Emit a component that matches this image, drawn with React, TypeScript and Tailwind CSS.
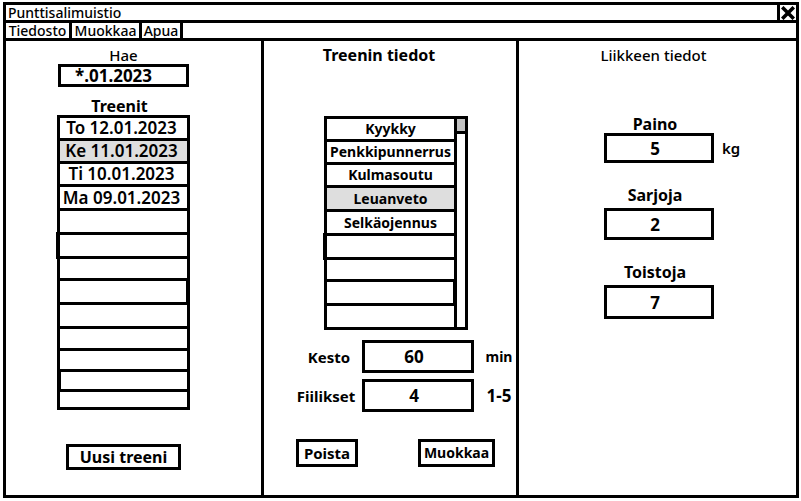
import { useState } from "react";
import type { ReactNode } from "react";

type Row = { text?: string; className: string };

const workouts: Row[] = [
  { text: "To 12.01.2023", className: "h-[23px]" },
  { text: "Ke 11.01.2023", className: "h-[23px]" },
  { text: "Ti 10.01.2023", className: "h-[23px]" },
  { text: "Ma 09.01.2023", className: "h-6" },
  { className: "h-6" },
  { className: "h-6 shadow-[-4px_0_0_#000,-4px_-3px_0_#000]" },
  { className: "h-[22px]" },
  { className: "h-6 border-r" },
  { className: "h-6" },
  { className: "h-[22px]" },
  { className: "h-[21px]" },
  { className: "h-5 border-l" },
  { className: "h-[18px]" },
];

const exercises: Row[] = [
  { text: "Kyykky", className: "h-[23px]" },
  { text: "Penkkipunnerrus", className: "h-[23px]" },
  { text: "Kulmasoutu", className: "h-[23px]" },
  { text: "Leuanveto", className: "h-6" },
  { text: "Selkäojennus", className: "h-6" },
  { className: "h-6 shadow-[-4px_0_0_#000,-4px_-3px_0_#000]" },
  { className: "h-[22px]" },
  { className: "h-6 border-r" },
  { className: "h-6" },
];

const details = [
  { id: "paino", label: "Paino", value: "5", unit: "kg", gap: "gap-px", box: "h-[30px]" },
  { id: "sarjoja", label: "Sarjoja", value: "2", unit: "", gap: "gap-[5px]", box: "h-8" },
  { id: "toistoja", label: "Toistoja", value: "7", unit: "", gap: "gap-[5px]", box: "h-[34px]" },
];

function RowList({ rows, initial, label, textClass }: { rows: Row[]; initial: number; label: string; textClass: string }) {
  const [selected, setSelected] = useState(initial);
  return (
    <ul aria-label={label} className="flex-1">
      {rows.map((row, i) => (
        <li key={i} className={`border-b-3 border-black ${row.className}`}>
          {row.text && (
            <button
              type="button"
              aria-pressed={i === selected}
              onClick={() => setSelected(i)}
              className={`flex h-full w-full items-center justify-center whitespace-nowrap ${textClass} ${i === selected ? "bg-[#dedede]" : "bg-white"}`}
            >
              {row.text}
            </button>
          )}
        </li>
      ))}
    </ul>
  );
}

function MenuItem({ children, className }: { children: ReactNode; className: string }) {
  return (
    <button type="button" className={`border-r-3 border-black text-center ${className}`}>
      {children}
    </button>
  );
}

export default function App() {
  return (
    <div className="flex min-h-screen flex-col bg-white pt-0.5 pr-0.5 pb-[3px] pl-[3px] font-['Comic_Sans_MS','Noto_Sans',sans-serif] text-sm leading-4 font-medium text-black">
      <div className="flex flex-1 flex-col border-3 border-black">
        <header className="flex h-[18px] items-stretch justify-between border-b-3 border-black">
          <h1 className="pl-0.5 leading-[15px]">Punttisalimuistio</h1>
          <button type="button" aria-label="Sulje" className="flex w-[19px] items-center justify-center border-l-3 border-black">
            <svg viewBox="0 0 14 14" className="size-[14px]" stroke="#000" strokeWidth="3.6" strokeLinecap="square">
              <path d="M2.5 2.5L11.5 11.5M11.5 2.5L2.5 11.5" />
            </svg>
          </button>
        </header>
        <nav className="flex h-[18px] border-b-3 border-black leading-[15px]">
          <MenuItem className="w-[66px]">Tiedosto</MenuItem>
          <MenuItem className="w-[70px]">Muokkaa</MenuItem>
          <MenuItem className="w-[41px]">Apua</MenuItem>
        </nav>

        <main className="grid flex-1 grid-cols-[258fr_255fr_277fr]">
          <section className="flex flex-col items-center border-r-3 border-black pt-1.5 pr-5">
            <label htmlFor="hae" className="mb-px text-[15px] leading-4">Hae</label>
            <input id="hae" defaultValue="*.01.2023" className="h-[23px] w-[131px] border-3 border-black pr-5 text-center text-[17px] font-bold outline-none" />
            <h2 className="mt-[11px] mb-px pr-2 text-base leading-4 font-bold">Treenit</h2>
            <div className="flex w-[133px] border-x-3 border-t-3 border-black">
              <RowList rows={workouts} initial={1} label="Treenit" textClass="pr-1 text-[17px] font-semibold" />
            </div>
            <button type="button" className="mt-[34px] h-[26px] w-[115px] border-3 border-black text-base leading-4 font-bold">Uusi treeni</button>
          </section>

          <section className="flex flex-col border-r-3 border-black pt-1.5">
            <h2 className="pr-[22px] text-center text-base leading-4 font-bold">Treenin tiedot</h2>
            <div className="flex flex-col pl-8">
              <div className="mt-[53px] ml-7 flex w-36 border-x-3 border-t-3 border-black">
                <RowList rows={exercises} initial={3} label="Liikkeet" textClass="font-bold" />
                <div className="w-[11px] border-b-3 border-l-3 border-black">
                  <div className="h-[15px] border-b-3 border-black bg-[#c3c3c3]" />
                </div>
              </div>
              <div className="mt-2.5 grid grid-cols-[66px_112px_1fr] items-center gap-y-1.5 text-center font-bold">
                <label htmlFor="kesto" className="text-[15px] leading-4">Kesto</label>
                <input id="kesto" defaultValue="60" className="h-[33px] w-full border-3 border-black pr-2 text-center text-[17px] outline-none" />
                <span className="pl-2">min</span>
                <label htmlFor="fiilikset" className="pr-1.5 text-[15px] leading-4">Fiilikset</label>
                <input id="fiilikset" defaultValue="4" className="h-[33px] w-full border-3 border-black pr-2 text-center text-[17px] outline-none" />
                <span className="pl-2 text-[17px] leading-4">1-5</span>
              </div>
              <div className="mt-[27px] flex justify-between pr-[21px] font-bold">
                <button type="button" className="h-7 w-[62px] border-3 border-black text-[15px]">Poista</button>
                <button type="button" className="h-7 w-[77px] border-3 border-black">Muokkaa</button>
              </div>
            </div>
          </section>

          <section className="flex flex-col pt-1.5">
            <h2 className="pr-2 text-center text-[15px] leading-4">Liikkeen tiedot</h2>
            <div className="mt-[53px] flex flex-col gap-6 pl-[85px]">
              {details.map((d) => (
                <div key={d.id} className={`flex flex-col font-bold ${d.gap}`}>
                  <label htmlFor={d.id} className="w-[110px] pr-2 text-center text-base leading-4">{d.label}</label>
                  <div className="flex items-center gap-2">
                    <input id={d.id} defaultValue={d.value} className={`w-[110px] border-3 border-black pr-2 text-center text-[17px] outline-none ${d.box}`} />
                    {d.unit && <span className="text-[15px] font-semibold">{d.unit}</span>}
                  </div>
                </div>
              ))}
            </div>
          </section>
        </main>
      </div>
    </div>
  );
}
